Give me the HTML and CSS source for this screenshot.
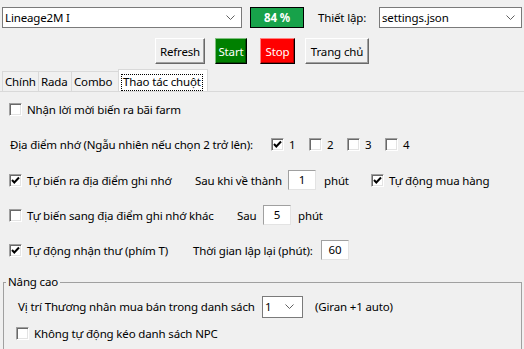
FILE: index.html
```html
<html lang="vi">
<head>
    <meta charset="UTF-8">
    <meta name="viewport" content="width=device-width, initial-scale=1.0">
    <title>Lineage2M Auto</title>
    <link rel="stylesheet" href="styles.css">
</head>
<body>
    <div class="top">
        <div class="combo combo-game">
            <span>Lineage2M I</span>
            <svg class="chev" width="9" height="5" viewBox="0 0 9 5"><polyline points="0.5,0.5 4.5,4.5 8.5,0.5" fill="none" stroke="#606060" stroke-width="1"/></svg>
        </div>
        <div class="progress">84 %</div>
        <span class="top-label">Thiết lập:</span>
        <div class="combo combo-settings">
            <span>settings.json</span>
            <svg class="chev" width="9" height="5" viewBox="0 0 9 5"><polyline points="0.5,0.5 4.5,4.5 8.5,0.5" fill="none" stroke="#606060" stroke-width="1"/></svg>
        </div>
    </div>

    <div class="buttons">
        <button class="btn btn-refresh">Refresh</button>
        <button class="btn btn-start">Start</button>
        <button class="btn btn-stop">Stop</button>
        <button class="btn btn-home">Trang chủ</button>
    </div>

    <div class="tabs">
        <div class="tab tab-main">Chính</div>
        <div class="tab tab-rada">Rada</div>
        <div class="tab tab-combo">Combo</div>
        <div class="tab tab-mouse active"><span class="focus">Thao tác chuột</span></div>
    </div>

    <div class="pane">
        <div class="row row1">
            <label class="check"><span class="box"></span>Nhận lời mời biến ra bãi farm</label>
        </div>

        <div class="row row2">
            <span class="places-label">Địa điểm nhớ (Ngẫu nhiên nếu chọn 2 trở lên):</span>
            <label class="check place"><span class="box on"><svg width="11" height="11" viewBox="0 0 11 11"><polyline points="2,5 4.3,7.5 9,2.5" fill="none" stroke="#000" stroke-width="2"/></svg></span>1</label>
            <label class="check place"><span class="box"></span>2</label>
            <label class="check place"><span class="box"></span>3</label>
            <label class="check place"><span class="box"></span>4</label>
        </div>

        <div class="row row3">
            <label class="check w-remember"><span class="box on"><svg width="11" height="11" viewBox="0 0 11 11"><polyline points="2,5 4.3,7.5 9,2.5" fill="none" stroke="#000" stroke-width="2"/></svg></span>Tự biến ra địa điểm ghi nhớ</label>
            <span class="w-after-town">Sau khi về thành</span>
            <div class="entry">1</div>
            <span class="unit w-unit">phút</span>
            <label class="check"><span class="box on"><svg width="11" height="11" viewBox="0 0 11 11"><polyline points="2,5 4.3,7.5 9,2.5" fill="none" stroke="#000" stroke-width="2"/></svg></span>Tự động mua hàng</label>
        </div>

        <div class="row row4">
            <label class="check w-other"><span class="box"></span>Tự biến sang địa điểm ghi nhớ khác</label>
            <span class="w-after">Sau</span>
            <div class="entry">5</div>
            <span class="unit">phút</span>
        </div>

        <div class="row row5">
            <label class="check w-mail"><span class="box on"><svg width="11" height="11" viewBox="0 0 11 11"><polyline points="2,5 4.3,7.5 9,2.5" fill="none" stroke="#000" stroke-width="2"/></svg></span>Tự động nhận thư (phím T)</label>
            <span class="w-repeat">Thời gian lập lại (phút):</span>
            <div class="entry">60</div>
        </div>
    </div>

    <fieldset class="group">
        <legend>Nâng cao</legend>
        <div class="row grow1">
            <span class="w-merchant">Vị trí Thương nhân mua bán trong danh sách</span>
            <div class="combo combo-small">
                <span>1</span>
                <svg class="chev" width="9" height="5" viewBox="0 0 9 5"><polyline points="0.5,0.5 4.5,4.5 8.5,0.5" fill="none" stroke="#606060" stroke-width="1"/></svg>
            </div>
            <span class="hint">(Giran +1 auto)</span>
        </div>
        <div class="row grow2">
            <label class="check"><span class="box"></span>Không tự động kéo danh sách NPC</label>
        </div>
    </fieldset>
</body>
</html>
```

FILE: styles.css
```css
body {
    margin: 0;
    background-color: #f0f0f0;
    font-family: "Noto Sans", "Open Sans", sans-serif;
    font-size: 11.5px;
    letter-spacing: -0.15px;
    color: #000;
    white-space: nowrap;
    overflow: hidden;
}

/* top bar */
.top {
    display: flex;
    align-items: flex-start;
    padding: 7px 2px 0 2px;
    height: 21px;
}
.combo {
    box-sizing: border-box;
    height: 21px;
    background-color: #fff;
    border: 1px solid #7a7a7a;
    display: flex;
    align-items: center;
    justify-content: space-between;
    padding: 0 6px 0 2px;
    line-height: 19px;
}
.combo-game {
    width: 240px;
}
.combo-settings {
    width: 143px;
    margin-left: auto;
}
.chev {
    display: block;
}
.progress {
    box-sizing: border-box;
    width: 54px;
    height: 21px;
    margin-left: 8px;
    background-color: #17a24a;
    border: 1px solid #000;
    color: #fff;
    font-weight: bold;
    text-align: center;
    line-height: 19px;
}
.top-label {
    margin-left: 14px;
    line-height: 21px;
}

/* buttons */
.buttons {
    display: flex;
    margin-top: 10px;
    padding-left: 155px;
}
.btn {
    box-sizing: border-box;
    height: 26px;
    padding: 0;
    font-family: inherit;
    font-size: 11.5px;
    letter-spacing: -0.15px;
    border: 1px solid;
    border-color: #fff #696969 #696969 #fff;
    box-shadow: inset -1px -1px 0 #a0a0a0;
    background-color: #f0f0f0;
    color: #000;
}
.btn-refresh {
    width: 50px;
}
.btn-start {
    width: 32px;
    margin-left: 10px;
    background-color: #008000;
    color: #fff;
    border-color: #7fbf7f #000 #000 #7fbf7f;
    box-shadow: inset -1px -1px 0 #005000;
}
.btn-stop {
    width: 35px;
    margin-left: 13px;
    background-color: #ff0000;
    color: #fff;
    border-color: #ff8080 #000 #000 #ff8080;
    box-shadow: inset -1px -1px 0 #b00000;
}
.btn-home {
    width: 64px;
    margin-left: 10px;
}

/* tabs */
.tabs {
    display: flex;
    align-items: flex-end;
    margin-top: 5px;
    padding-left: 2px;
    height: 22px;
}
.tab {
    box-sizing: border-box;
    height: 20px;
    line-height: 19px;
    padding-left: 2px;
    border: 1px solid #d9d9d9;
    border-bottom: none;
    border-left: none;
    background-color: #f0f0f0;
}
.tab-main {
    width: 37px;
    border-left: 1px solid #d9d9d9;
}
.tab-rada {
    width: 33px;
}
.tab-combo {
    width: 47px;
}
.tab-mouse {
    width: 90px;
}
.tab.active {
    height: 22px;
    background-color: #fff;
    border-left: 1px solid #d9d9d9;
    margin-left: -1px;
    padding: 4px 0 0 2px;
    line-height: 14px;
}
.focus {
    display: inline-block;
    border: 1px dotted #000;
    padding: 0 1px 1px 1px;
}

/* pane */
.pane {
    border-top: 1px solid #d9d9d9;
    padding-left: 9px;
}
.row {
    display: flex;
    align-items: center;
    height: 20px;
}
.row1 {
    margin-top: 7px;
}
.row2 {
    margin-top: 15px;
}
.row3 {
    margin-top: 16px;
}
.row4 {
    margin-top: 15px;
}
.row5 {
    margin-top: 15px;
}

.check {
    display: flex;
    align-items: center;
}
.box {
    box-sizing: border-box;
    flex: none;
    width: 13px;
    height: 13px;
    margin-right: 5px;
    background-color: #fff;
    border: 1px solid;
    border-color: #a0a0a0 #fff #fff #a0a0a0;
    box-shadow: inset 1px 1px 0 #696969, inset -1px -1px 0 #e3e3e3;
    display: flex;
    align-items: center;
    justify-content: center;
}
.box svg {
    display: block;
}

.places-label {
    width: 261px;
    margin-left: 1px;
}
.place {
    width: 38px;
}

.entry {
    box-sizing: border-box;
    flex: none;
    width: 28px;
    height: 20px;
    background-color: #fff;
    border: 1px solid;
    border-color: #a0a0a0 #e3e3e3 #e3e3e3 #a0a0a0;
    text-align: center;
    line-height: 18px;
}
.unit {
    margin-left: 8px;
}
.w-remember {
    width: 186px;
}
.w-after-town {
    width: 93px;
}
.w-unit {
    width: 47px;
}
.w-other {
    width: 228px;
}
.w-after {
    width: 26px;
}
.row4 .unit {
    margin-left: 7px;
}
.w-mail {
    width: 184px;
}
.w-repeat {
    width: 128px;
}

/* Nang cao group */
.group {
    margin: 14px 2px 0 3px;
    padding: 0 0 20px 14px;
    border: 1px solid #a0a0a0;
    border-bottom: none;
}
.group legend {
    padding: 0 2px;
    margin-left: -12px;
    line-height: 16px;
}
.grow1 {
    margin-top: 6px;
    height: 21px;
}
.w-merchant {
    width: 244px;
}
.combo-small {
    width: 41px;
    height: 22px;
    padding: 0 8px 0 2px;
}
.hint {
    margin-left: 12px;
}
.grow2 {
    margin-top: 6px;
    margin-left: -2px;
}
```
